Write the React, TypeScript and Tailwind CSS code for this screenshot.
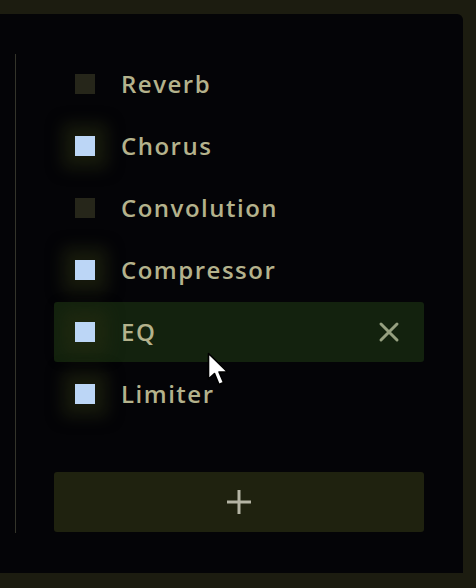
import { useState } from 'react'

interface Effect {
  name: string
  active: boolean
}

const effects: Effect[] = [
  { name: 'Reverb', active: false },
  { name: 'Chorus', active: true },
  { name: 'Convolution', active: false },
  { name: 'Compressor', active: true },
  { name: 'EQ', active: true },
  { name: 'Limiter', active: true },
]

function Cursor() {
  return (
    <svg
      width="24"
      height="36"
      viewBox="0 0 24 36"
      className="pointer-events-none absolute left-[207px] top-[338px]"
    >
      <path
        d="M1.5 1.5 L1.5 27 L7.5 21.5 L12 32.5 L16.5 30.5 L12 20 L20.5 20 Z"
        fill="#ffffff"
        stroke="#000000"
        strokeWidth="1.6"
        strokeLinejoin="round"
      />
    </svg>
  )
}

export default function App() {
  const [hovered] = useState(4)

  return (
    <div
      className="flex h-[588px] w-[476px] flex-col bg-[#1c1c10] pb-[15px] pr-[13px] pt-[14px]"
      style={{ fontFamily: '"Open Sans", "Noto Sans", sans-serif' }}
    >
      <div className="relative flex flex-1 rounded-tr-[6px] bg-[#040407] pt-[40px]">
        <div className="ml-[15px] h-[479px] w-px bg-[#34342a]" />
        <div className="ml-[38px] flex w-[370px] flex-col">
          <div className="flex flex-col gap-[2px]">
            {effects.map((fx, i) => (
              <div
                key={fx.name}
                className={`flex h-[60px] items-center rounded-[3px] pl-[21px] pr-[24px] ${
                  i === hovered ? 'bg-[#13220e]' : ''
                }`}
              >
                <span
                  className={`h-[20px] w-[20px] shrink-0 ${
                    fx.active
                      ? 'bg-[#bcd6f6] shadow-[0_0_16px_12px_rgba(38,44,16,0.55)]'
                      : 'bg-[#26261a]'
                  }`}
                />
                <span className="ml-[26px] flex-1 text-[24px] font-semibold tracking-[1.5px] text-[#b4b28c]">
                  {fx.name}
                </span>
                {i === hovered && (
                  <svg width="22" height="22" viewBox="0 0 22 22">
                    <path
                      d="M3 3 L19 19 M19 3 L3 19"
                      stroke="#96a080"
                      strokeWidth="3"
                      strokeLinecap="round"
                    />
                  </svg>
                )}
              </div>
            ))}
          </div>
          <button
            type="button"
            className="mt-[48px] flex h-[60px] items-center justify-center rounded-[3px] bg-[#1f220f]"
          >
            <svg width="24" height="24" viewBox="0 0 24 24">
              <path d="M12 0 V24 M0 12 H24" stroke="#b4b4a4" strokeWidth="3" />
            </svg>
          </button>
        </div>
        <Cursor />
      </div>
    </div>
  )
}
